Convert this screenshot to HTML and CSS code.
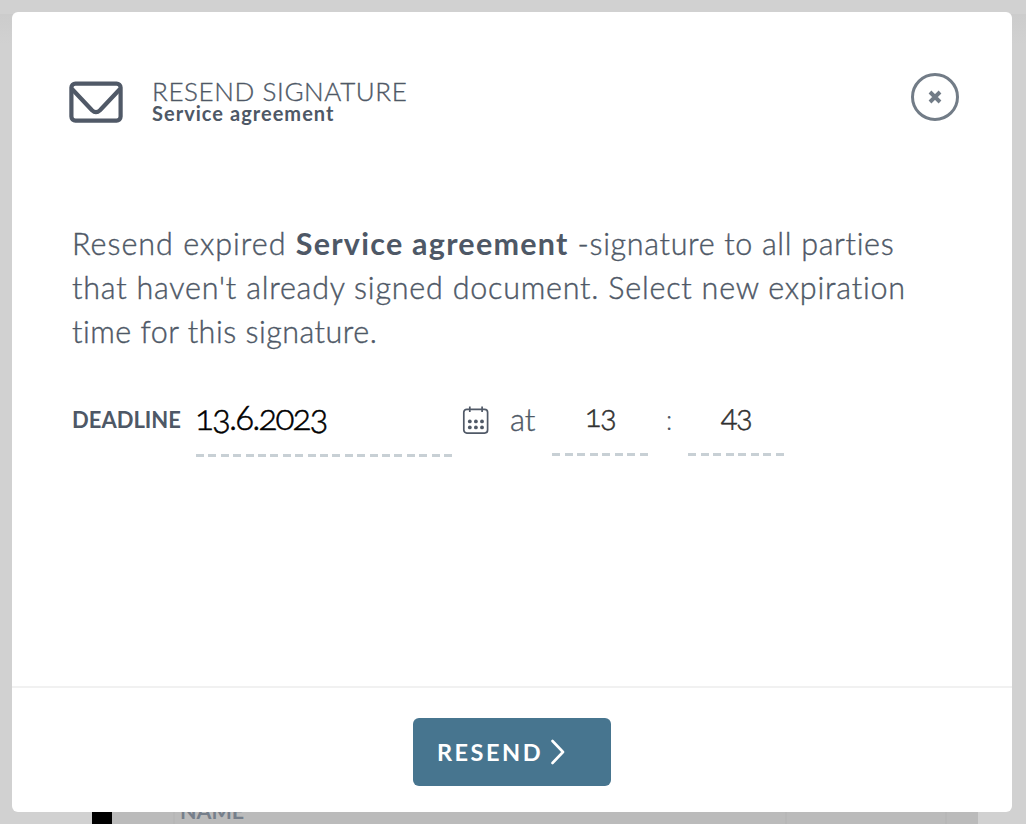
FILE: index.html
```html
<!DOCTYPE html>
<html lang="en">
<head>
<meta charset="utf-8">
<title>Resend signature</title>
<link rel="stylesheet" href="styles.css">
</head>
<body>
<div class="backdrop">
  <div class="table-head"><span class="bar"></span><span class="cell name">NAME</span><span class="cell"></span></div>
</div>
<section class="modal">
  <header class="modal-header">
    <svg class="mail" width="54" height="42" viewBox="0 0 54 42" fill="none" stroke="#505967" stroke-width="4.2" stroke-linejoin="round"><rect x="2.4" y="2.6" width="49.2" height="37" rx="4"/><path d="M3 8L23 29.2Q27 33 31 29.2L51 8"/></svg>
    <div class="titles">
      <h1 class="title">RESEND SIGNATURE</h1>
      <h2 class="subtitle">Service agreement</h2>
    </div>
    <button class="close" aria-label="Close"><svg width="14" height="14" viewBox="0 0 14 14" stroke="#727c87" stroke-width="3.9"><path d="M2 2L12 12M12 2L2 12"/></svg></button>
  </header>
  <main class="content">
    <p class="message"><span class="intro">Resend expired </span><b class="doc">Service agreement</b><span class="scope"> -signature to all parties</span><br>that haven't already signed document. Select new expiration<br><span class="last">time for this signature.</span></p>
    <div class="deadline">
      <span class="label">DEADLINE</span>
      <span class="field date">13.6.2023</span>
      <svg class="calendar" width="28" height="30" viewBox="0 0 28 30" fill="none" stroke="#505967" stroke-width="1.7"><rect x="2.8" y="4.3" width="23.8" height="23.8" rx="3"/><path d="M8.8 1.5V7M21.1 1.5V7"/><g fill="#505967" stroke="none"><circle cx="8.8" cy="16.4" r="1.9"/><circle cx="14.9" cy="16.4" r="1.9"/><circle cx="21" cy="16.4" r="1.9"/><circle cx="8.8" cy="22.4" r="1.9"/><circle cx="14.9" cy="22.4" r="1.9"/><circle cx="21" cy="22.4" r="1.9"/></g></svg>
      <span class="at">at</span>
      <span class="field time">13</span>
      <span class="colon">:</span>
      <span class="field time">43</span>
    </div>
  </main>
  <footer class="modal-footer">
    <button class="resend"><span>RESEND</span><svg width="18" height="28" viewBox="0 0 18 28" fill="none" stroke="#fff" stroke-width="2.6" stroke-linecap="round" stroke-linejoin="round"><path d="M3.5 3L14 14L3.5 25"/></svg></button>
  </footer>
</section>
</body>
</html>
```
FILE: styles.css
```css
* { box-sizing: border-box; }
body {
  margin: 0;
  width: 1026px;
  height: 824px;
  padding: 12px;
  overflow: hidden;
  background: linear-gradient(#d1d1d1 0 14px, #cccccc 14px, #d1d1d1 44px);
  color: #4e5866;
  font-family: "Lato", sans-serif;
}
.backdrop {
  position: absolute;
  left: 92px;
  top: 800px;
  width: 886px;
  height: 24px;
  overflow: hidden;
  background: #bbb;
}
.table-head { display: flex; height: 24px; }
.bar { width: 20px; background: #000; }
.cell { width: 160px; border-right: 2px solid #b7b7b7; }
.name {
  width: 614px;
  margin-left: 61px;
  padding-left: 5px;
  border-left: 2px solid #b7b7b7;
  color: #767f8b;
  font-size: 21.5px;
  font-weight: 700;
  line-height: 22px;
}
.modal {
  position: relative;
  display: flex;
  flex-direction: column;
  width: 1000px;
  height: 800px;
  border-radius: 6px;
  background: #fff;
}
.modal-header {
  display: flex;
  align-items: flex-start;
  padding: 61px 53px 0 57px;
  height: 210px;
}
.mail { margin-top: 8px; }
.titles { margin: 6px 0 0 29px; flex: 1; }
.title, .subtitle { margin: 0; white-space: nowrap; }
.title {
  font-size: 26px;
  font-weight: 300;
  line-height: 24px;
  letter-spacing: 0.6px;
  -webkit-text-stroke: 0.35px;
}
.subtitle { font-size: 20px; font-weight: 700; line-height: 20px; letter-spacing: 1.03px; }
button { border: 0; padding: 0; font-family: inherit; }
.close {
  display: flex;
  align-items: center;
  justify-content: center;
  width: 48px;
  height: 48px;
  border: 3px solid #727c87;
  border-radius: 50%;
  background: #fff;
}
.content { flex: 1; padding: 0 60px; }
.message {
  margin: -1px 0 0;
  font-size: 30.5px;
  font-weight: 300;
  line-height: 44px;
  letter-spacing: 0.78px;
  white-space: pre;
  -webkit-text-stroke: 0.4px;
}
.intro { letter-spacing: 1px; }
.doc { font-weight: 700; letter-spacing: 1.25px; -webkit-text-stroke: 0; }
.scope { letter-spacing: 0.67px; }
.last { letter-spacing: 0.5px; }
.deadline { display: flex; height: 64px; margin-top: 44px; line-height: 44px; }
.label { width: 124px; font-size: 22px; font-weight: 700; line-height: 46px; }
.field {
  height: 60px;
  background: repeating-linear-gradient(90deg, #c8d0d5 0 8px, transparent 8px 12.4px) bottom / 100% 3px no-repeat;
  font-variant-numeric: oldstyle-nums;
  font-weight: 300;
  line-height: 38px;
  -webkit-text-stroke: 0.5px;
}
.date {
  width: 256px;
  color: #000;
  font-size: 35px;
  letter-spacing: -1.9px;
  text-indent: -1px;
}
.time {
  width: 96px;
  height: 59px;
  background-image: repeating-linear-gradient(90deg, #c8d0d5 0 8px, transparent 8px 12.57px);
  color: #303030;
  font-size: 31px;
  letter-spacing: -1.5px;
  line-height: 37px;
  text-align: center;
}
.calendar { margin: 8px 0 0 9px; }
.at {
  width: 63px;
  padding-left: 21px;
  font-size: 31px;
  font-weight: 300;
  -webkit-text-stroke: 0.4px;
}
.colon { width: 40px; padding-left: 2px; text-align: center; font-size: 28px; font-weight: 300; }
.modal-footer {
  display: flex;
  justify-content: center;
  height: 126px;
  padding-top: 30px;
  border-top: 2px solid #f1f1f1;
}
.resend {
  display: flex;
  align-items: center;
  width: 198px;
  height: 68px;
  padding: 0 0 1px 24px;
  border-radius: 6px;
  background: #47758f;
  color: #fff;
  font-size: 23.5px;
  font-weight: 700;
  line-height: 26px;
  letter-spacing: 2.5px;
}
.resend svg { margin: 1px 0 0 6px; }
```
